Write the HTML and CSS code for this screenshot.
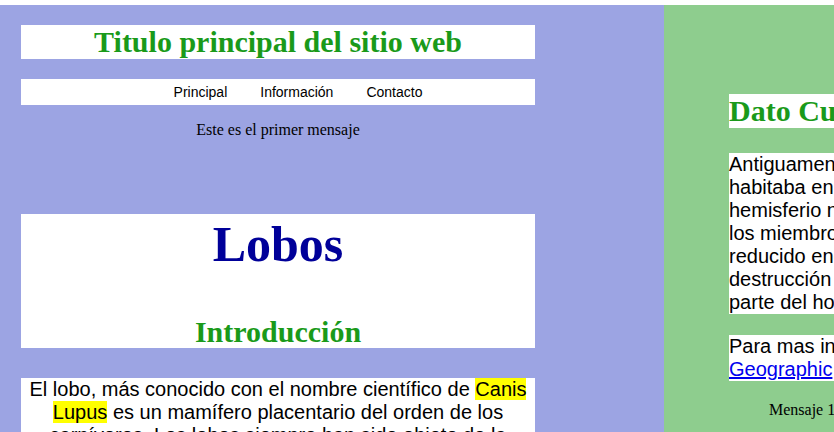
FILE: index.html
```html
<!DOCTYPE html>
<html lang="es">
<head>
<meta charset="utf-8">
<title>Lobos</title>
<link rel="stylesheet" href="styles.css">
</head>
<body>
<div class="page">
  <main class="main">
    <header class="site-title"><h1>Titulo principal del sitio web</h1></header>
    <nav class="nav">
      <ul class="nav-list">
        <li><a href="#">Principal</a></li>
        <li><a href="#">Información</a></li>
        <li><a href="#">Contacto</a></li>
      </ul>
    </nav>
    <div class="message">Este es el primer mensaje</div>
    <section class="hero">
      <h1 class="hero-title">Lobos</h1>
      <h2 class="hero-sub">Introducción</h2>
    </section>
    <p class="intro">El lobo, más conocido con el nombre científico de <mark>Canis Lupus</mark> es un mamífero placentario del orden de los carnívoros. Los lobos siempre han sido objeto de la curiosidad del hombre.</p>
  </main>
  <aside class="aside">
    <h2 class="aside-title">Dato Curioso</h2>
    <p class="aside-text">Antiguamente el lobo gris<br>habitaba en todo el<br>hemisferio norte, pero hoy<br>los miembros se han<br>reducido enormemente por<br>destrucción de su hábitat por<br>parte del hombre.</p>
    <p class="aside-text">Para mas información visita<br><a href="#">Geographic</a></p>
    <div class="aside-message">Mensaje 1</div>
  </aside>
</div>
</body>
</html>
```

FILE: styles.css
```css
html, body {
  margin: 0;
  padding: 0;
  background: #ffffff;
  overflow: hidden;
}

.page {
  margin-top: 5px;
  display: flex;
  width: 1100px;
  height: 427px;
}

.main {
  width: 664px;
  flex: none;
  box-sizing: border-box;
  background: #9ca4e3;
  padding: 20px 0 0 21px;
}

.site-title {
  width: 514px;
  background: #ffffff;
  text-align: center;
}

.site-title h1 {
  margin: 0;
  font-family: "Liberation Serif", serif;
  font-size: 30px;
  line-height: 34px;
  font-weight: bold;
  color: #1a9a1a;
}

.nav {
  width: 514px;
  margin-top: 20px;
  height: 26px;
  background: #ffffff;
}

.nav-list {
  list-style: none;
  margin: 0;
  padding: 0 0 0 40px;
  height: 26px;
  display: flex;
  justify-content: center;
  align-items: center;
  gap: 33px;
  font-family: "Liberation Sans", Arial, sans-serif;
  font-size: 14px;
}

.nav-list a {
  color: #000000;
  text-decoration: none;
}

.message {
  width: 514px;
  margin-top: 15px;
  text-align: center;
  font-family: "Liberation Serif", serif;
  font-size: 16px;
  line-height: 20px;
  color: #000000;
}

.hero {
  width: 514px;
  box-sizing: border-box;
  padding-top: 2px;
  margin-top: 74px;
  height: 134px;
  background: #ffffff;
  text-align: center;
  font-family: "Liberation Serif", serif;
}

.hero-title {
  margin: 0;
  font-size: 50px;
  line-height: 56px;
  font-weight: bold;
  color: #000099;
}

.hero-sub {
  margin: 44px 0 0;
  font-size: 30px;
  line-height: 32px;
  font-weight: bold;
  color: #1a9a1a;
}

.intro {
  width: 514px;
  margin: 30px 0 0;
  background: #ffffff;
  text-align: center;
  font-family: "Liberation Sans", Arial, sans-serif;
  font-size: 20px;
  line-height: 23px;
  color: #000000;
}

.intro mark {
  background: #ffff00;
  color: #000000;
}

.aside {
  flex: none;
  width: 436px;
  box-sizing: border-box;
  background: #8ecd8e;
  padding: 89px 0 0 65px;
}

.aside-title {
  margin: 0;
  background: #ffffff;
  font-family: "Liberation Serif", serif;
  font-size: 30px;
  line-height: 34px;
  font-weight: bold;
  color: #1a9a1a;
}

.aside-text {
  margin: 25px 0 0;
  background: #ffffff;
  font-family: "Liberation Sans", Arial, sans-serif;
  font-size: 20px;
  line-height: 23px;
  color: #000000;
}

.aside-text + .aside-text {
  margin-top: 21px;
}

.aside-text a {
  color: #0000ee;
  text-decoration: underline;
}

.aside-message {
  margin-top: 20px;
  padding-left: 40px;
  font-family: "Liberation Serif", serif;
  font-size: 16px;
  line-height: 18px;
  color: #000000;
}
```
